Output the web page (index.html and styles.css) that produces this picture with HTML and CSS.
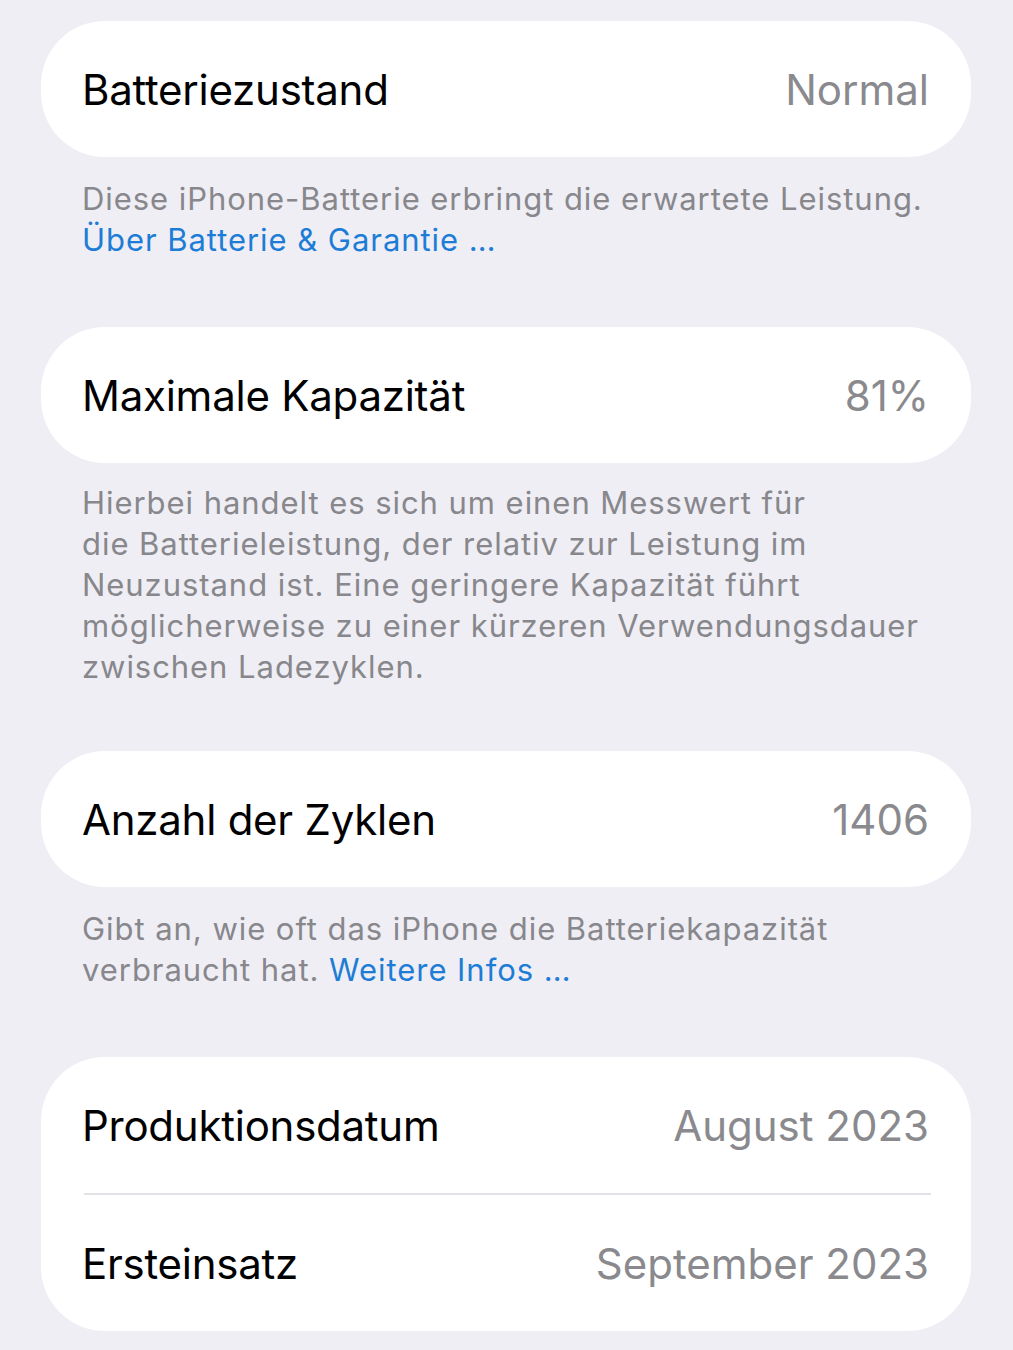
FILE: index.html
```html
<!DOCTYPE html>
<html lang="de">
<head>
<meta charset="utf-8">
<title>Batteriezustand</title>
<link rel="stylesheet" href="styles.css">
</head>
<body>
<main class="page">
  <section class="group">
    <div class="card">
      <div class="row"><span class="label">Batteriezustand</span><span class="value">Normal</span></div>
    </div>
    <p class="footer">Diese iPhone-Batterie erbringt die erwartete Leistung.<br><span class="link">Über Batterie &amp; Garantie …</span></p>
  </section>
  <section class="group group-tight">
    <div class="card">
      <div class="row"><span class="label">Maximale Kapazität</span><span class="value">81%</span></div>
    </div>
    <p class="footer">Hierbei handelt es sich um einen Messwert für<br>die Batterieleistung, der relativ zur Leistung im<br>Neuzustand ist. Eine geringere Kapazität führt<br>möglicherweise zu einer kürzeren Verwendungsdauer<br>zwischen Ladezyklen.</p>
  </section>
  <section class="group">
    <div class="card">
      <div class="row"><span class="label">Anzahl der Zyklen</span><span class="value">1406</span></div>
    </div>
    <p class="footer">Gibt an, wie oft das iPhone die Batteriekapazität<br>verbraucht hat. <span class="link">Weitere Infos …</span></p>
  </section>
  <section class="group">
    <div class="card">
      <div class="row"><span class="label">Produktionsdatum</span><span class="value">August 2023</span></div>
      <div class="divider"></div>
      <div class="row"><span class="label">Ersteinsatz</span><span class="value">September 2023</span></div>
    </div>
  </section>
</main>
</body>
</html>
```

FILE: styles.css
```css
html, body {
  margin: 0;
  padding: 0;
  background: #efeef4;
}
body {
  font-family: Inter, "Noto Sans", "Liberation Sans", sans-serif;
  -webkit-font-smoothing: antialiased;
}
.page {
  padding: 21px 42px 0 41px;
  display: flex;
  flex-direction: column;
}
.group {
  margin-bottom: 67px;
}
.group-tight {
  margin-bottom: 64px;
}
.group-tight .footer {
  padding-top: 19px;
}
.card {
  background: #ffffff;
  border-radius: 64px;
  padding: 0 42px 0 41px;
}
.row {
  height: 136px;
  display: flex;
  align-items: center;
  justify-content: space-between;
}
.label {
  font-size: 42px;
  color: #000000;
  letter-spacing: -0.25px;
}
.value {
  font-size: 42px;
  color: #8a8a8e;
  letter-spacing: 0;
}
.divider {
  height: 2px;
  background: #e3e3e7;
  margin-left: 2px;
  margin-right: -2px;
}
.footer {
  margin: 0;
  padding: 21px 40px 0 41px;
  font-size: 31px;
  line-height: 41px;
  color: #87878c;
  letter-spacing: 0.95px;
}
.link {
  color: #1d7dd6;
}
```
